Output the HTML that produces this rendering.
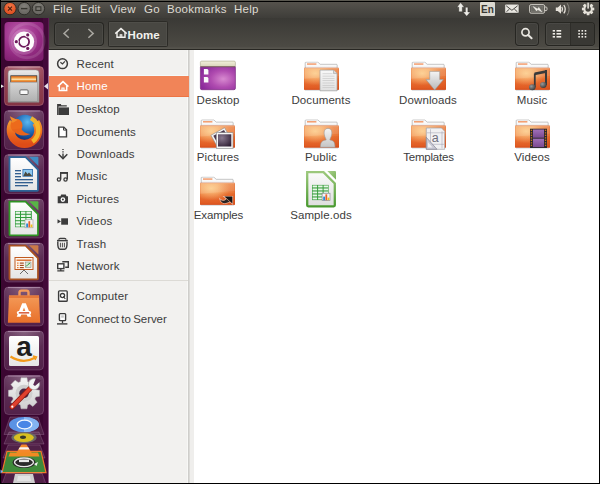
<!DOCTYPE html>
<html><head><meta charset="utf-8">
<style>
*{margin:0;padding:0;box-sizing:border-box}
html,body{width:600px;height:484px;overflow:hidden;background:#000}
body{position:relative;font-family:"Liberation Sans",sans-serif}
.abs{position:absolute}
#panel{left:1px;top:0;width:598px;height:18px;background:linear-gradient(#5a5850 0,#5a5850 1px,#000 1px,#000 2px,#55524c 2px,#3e3d39 100%)}
#toolbar{left:48px;top:18px;width:551px;height:32px;background:linear-gradient(#3a3935,#4c4a44 92%,#56544d 97%);border-bottom:1px solid #282723}
#launcher{left:1px;top:18px;width:47px;height:465px;background:#3b0631}
#lstrip{left:43px;top:18px;width:6px;height:465px;background:#430939;border-right:1px solid #5a1a50}
#sidebar{left:49px;top:50px;width:139px;height:433px;background:#f2f1ef;border-left:1px solid #f6f8f4}
#sep{left:187px;top:50px;width:2px;height:433px;background:#cfcecb;border-left:1px solid #f8f8f6}
#content{left:189px;top:50px;width:410px;height:433px;background:#fff}
#shade{left:189px;top:50px;width:5px;height:433px;background:#efeeec;border-left:1px solid #dcdbd8}
.menu{top:2px;font-size:11.5px;color:#dfdbd2;line-height:14px;letter-spacing:0.25px}
.side{left:76.5px;font-size:11.5px;color:#3c3c3c;line-height:14px;letter-spacing:0.15px}
.lbl{font-size:11.5px;color:#3c3c3c;line-height:14px;text-align:center;width:100px;letter-spacing:0.1px}
.btn{border-radius:4px;border:1px solid rgba(30,29,26,0.75);background:linear-gradient(#403f3b,#44433e);box-shadow:inset 0 0 0 1px rgba(255,255,255,0.05),0 1px 0 rgba(255,255,255,0.06)}
</style></head><body>
<div id="panel" class="abs"></div>
<svg class="abs" style="left:0;top:0" width="50" height="18" viewBox="0 0 50 18">
<defs><radialGradient id="wcl" cx="0.5" cy="0.35" r="0.65"><stop offset="0" stop-color="#f47a4a"/><stop offset="1" stop-color="#d9481a"/></radialGradient>
<radialGradient id="wgr" cx="0.5" cy="0.35" r="0.65"><stop offset="0" stop-color="#83817b"/><stop offset="1" stop-color="#64625d"/></radialGradient></defs>
<circle cx="10" cy="8.6" r="6.2" fill="url(#wcl)" stroke="#2a2925" stroke-width="0.9"/>
<path d="M8 6.6 L12 10.6 M12 6.6 L8 10.6" stroke="#4a1e0e" stroke-width="1.1"/>
<circle cx="24.2" cy="8.6" r="6.2" fill="url(#wgr)" stroke="#2a2925" stroke-width="0.9"/>
<path d="M21 8.6 H27.4" stroke="#36352f" stroke-width="1.4"/>
<circle cx="38.4" cy="8.6" r="6.2" fill="url(#wgr)" stroke="#2a2925" stroke-width="0.9"/>
<rect x="35.9" y="6.8" width="5" height="3.7" fill="none" stroke="#36352f" stroke-width="1.1"/>
</svg>
<div class="abs menu" style="left:53px">File</div>
<div class="abs menu" style="left:80px">Edit</div>
<div class="abs menu" style="left:110px">View</div>
<div class="abs menu" style="left:144px">Go</div>
<div class="abs menu" style="left:167px">Bookmarks</div>
<div class="abs menu" style="left:234px">Help</div>
<div id="toolbar" class="abs"></div>
<div id="launcher" class="abs"></div>
<div id="lstrip" class="abs"></div>
<div id="sidebar" class="abs"></div><div class="abs" style="left:48px;top:50px;width:1px;height:433px;background:#9a6a90"></div>
<div id="sep" class="abs"></div>
<div id="content" class="abs"></div>
<div id="shade" class="abs"></div>
<div class="abs btn" style="left:54px;top:22px;width:50px;height:24px"></div>
<div class="abs" style="left:108px;top:21px;width:60px;height:26px;background:#484742;border:1px solid #2c2b27;border-radius:1.5px;box-shadow:inset 0 0 0 1px rgba(255,255,255,0.04)"></div>
<div class="abs btn" style="left:515px;top:22px;width:24px;height:24px"></div>
<div class="abs btn" style="left:545px;top:22px;width:50px;height:24px"></div>
<div class="abs" style="left:570px;top:23px;width:24px;height:22px;background:#393834;border-left:1px solid #2e2d29;border-radius:0 3px 3px 0"></div>
<div class="abs" style="top:27.8px;width:50px;font-size:11.5px;font-weight:bold;color:#f2f1ee;line-height:14px;left:127.6px">Home</div>
<div class="abs" style="left:49px;top:75px;width:139px;height:1px;background:#f4fafa"></div><div class="abs" style="left:49px;top:76px;width:140px;height:21px;background:#f18458;border-bottom:1px solid #ec7444"></div>
<div class="abs" style="left:49px;top:280px;width:139px;height:1px;background:#dcdad5"></div>
<div class="abs side" style="top:56.6px">Recent</div>
<div class="abs side" style="top:79.1px;color:#fff">Home</div>
<div class="abs side" style="top:101.6px">Desktop</div>
<div class="abs side" style="top:124.5px">Documents</div>
<div class="abs side" style="top:146.6px">Downloads</div>
<div class="abs side" style="top:169px">Music</div>
<div class="abs side" style="top:191.5px">Pictures</div>
<div class="abs side" style="top:214px">Videos</div>
<div class="abs side" style="top:236.6px">Trash</div>
<div class="abs side" style="top:258.6px">Network</div>
<div class="abs side" style="top:288.5px">Computer</div>
<div class="abs side" style="top:312px;word-spacing:-0.8px;letter-spacing:-0.05px">Connect to Server</div>
<div class="abs lbl" style="left:168px;top:92.6px">Desktop</div>
<div class="abs lbl" style="left:271px;top:92.6px">Documents</div>
<div class="abs lbl" style="left:378px;top:92.6px">Downloads</div>
<div class="abs lbl" style="left:482px;top:92.6px">Music</div>
<div class="abs lbl" style="left:168px;top:149.8px">Pictures</div>
<div class="abs lbl" style="left:271px;top:149.8px">Public</div>
<div class="abs lbl" style="left:378.5px;top:149.8px;letter-spacing:-0.2px">Templates</div>
<div class="abs lbl" style="left:482px;top:149.8px">Videos</div>
<div class="abs lbl" style="left:168.5px;top:207.5px;letter-spacing:-0.15px">Examples</div>
<div class="abs lbl" style="left:271px;top:207.5px">Sample.ods</div>
<svg class="abs" style="left:0;top:0" width="600" height="484" viewBox="0 0 600 484"><defs>
<linearGradient id="tileg" x1="0" y1="0" x2="0" y2="1"><stop offset="0" stop-color="#ffe8ff" stop-opacity="0.2"/><stop offset="1" stop-color="#ffe8ff" stop-opacity="0.12"/></linearGradient>
<radialGradient id="tileshine" cx="0.5" cy="0" r="0.6" fx="0.5" fy="0"><stop offset="0" stop-color="#fff" stop-opacity="0.22"/><stop offset="1" stop-color="#fff" stop-opacity="0"/></radialGradient>
<radialGradient id="dashg" cx="0.4" cy="0.3" r="0.8"><stop offset="0" stop-color="#c060b0"/><stop offset="0.6" stop-color="#9a2f88"/><stop offset="1" stop-color="#7e1f6e"/></radialGradient>
<linearGradient id="filesg" x1="0" y1="0" x2="0" y2="1"><stop offset="0" stop-color="#9c4a5a"/><stop offset="1" stop-color="#843444"/></linearGradient>
<linearGradient id="cabtop" x1="0" y1="0" x2="0" y2="1"><stop offset="0" stop-color="#f4f4f4"/><stop offset="1" stop-color="#d8d8d8"/></linearGradient>
<linearGradient id="cabfront" x1="0" y1="0" x2="0" y2="1"><stop offset="0" stop-color="#d6d6d6"/><stop offset="1" stop-color="#b0b0b0"/></linearGradient>
<linearGradient id="ffor" x1="0" y1="0" x2="0" y2="1"><stop offset="0" stop-color="#f29a30"/><stop offset="0.5" stop-color="#ec6a1e"/><stop offset="1" stop-color="#de4c18"/></linearGradient>
<radialGradient id="ffblue" cx="0.6" cy="0.3" r="0.7"><stop offset="0" stop-color="#5ab8f0"/><stop offset="0.6" stop-color="#1f6ab8"/><stop offset="1" stop-color="#123a80"/></radialGradient>
<linearGradient id="docg" x1="0" y1="0" x2="0" y2="1"><stop offset="0" stop-color="#ffffff"/><stop offset="1" stop-color="#e4e4e4"/></linearGradient>
<linearGradient id="scg" x1="0" y1="0" x2="0" y2="1"><stop offset="0" stop-color="#f49a58"/><stop offset="1" stop-color="#e8702a"/></linearGradient>
<linearGradient id="amzg" x1="0" y1="0" x2="0" y2="1"><stop offset="0" stop-color="#ffffff"/><stop offset="1" stop-color="#e6e6e6"/></linearGradient>
<linearGradient id="gearg" x1="0" y1="0" x2="0" y2="1"><stop offset="0" stop-color="#f4f4f4"/><stop offset="1" stop-color="#cfcfcf"/></linearGradient>
<linearGradient id="fback" x1="0" y1="0" x2="0" y2="1"><stop offset="0" stop-color="#ffffff"/><stop offset="0.6" stop-color="#f8f8f8"/><stop offset="1" stop-color="#e0e0e0"/></linearGradient>
<linearGradient id="ffront" x1="0" y1="0" x2="0" y2="1"><stop offset="0" stop-color="#f59c5c"/><stop offset="0.45" stop-color="#f08444"/><stop offset="0.5" stop-color="#ec7636"/><stop offset="1" stop-color="#de5620"/></linearGradient>
<radialGradient id="fhl" cx="0.32" cy="0.25" r="0.55"><stop offset="0" stop-color="#ffdc9a" stop-opacity="0.8"/><stop offset="1" stop-color="#ffdc9a" stop-opacity="0"/></radialGradient><linearGradient id="fdark" x1="0" y1="0" x2="1" y2="0"><stop offset="0.5" stop-color="#c83c08" stop-opacity="0"/><stop offset="1" stop-color="#c83c08" stop-opacity="0.22"/></linearGradient>
<radialGradient id="deskg" cx="0.65" cy="0.55" r="0.7"><stop offset="0" stop-color="#d88ad0"/><stop offset="0.5" stop-color="#b04cb0"/><stop offset="1" stop-color="#8a2a9a"/></radialGradient>
<linearGradient id="deskbar" x1="0" y1="0" x2="0" y2="1"><stop offset="0" stop-color="#f2f0dc"/><stop offset="1" stop-color="#d8d4b8"/></linearGradient>
<symbol id="folder" viewBox="0 0 35 30">
<path d="M1.2 7 V1.4 Q1.2 0.6 2 0.6 H13.8 L16.2 2.8 H32.4 Q33.2 2.8 33.2 3.6 V7 Z" fill="url(#fback)" stroke="#a0a0a0" stroke-width="0.6"/>
<rect x="3" y="2" width="9.4" height="1.1" fill="#f07a3a"/>
<path d="M0 7 Q0 6.4 0.7 6.4 H34.3 Q35 6.4 35 7 V27.4 Q35 28.3 34 28.3 H1 Q0 28.3 0 27.4 Z" fill="url(#ffront)"/>
<path d="M0 7 Q0 6.4 0.7 6.4 H34.3 Q35 6.4 35 7 V27.4 Q35 28.3 34 28.3 H1 Q0 28.3 0 27.4 Z" fill="url(#fhl)"/>
<path d="M0 7 Q0 6.4 0.7 6.4 H34.3 Q35 6.4 35 7 V27.4 Q35 28.3 34 28.3 H1 Q0 28.3 0 27.4 Z" fill="url(#fdark)"/>
<path d="M0 7 Q0 6.4 0.7 6.4 H34.3 Q35 6.4 35 7 V14.5 Q18 15.5 0 17.5 Z" fill="#fff" opacity="0.1"/>
<path d="M0 7 Q0 6.4 0.7 6.4 H34.3 Q35 6.4 35 7 V27.4 Q35 28.3 34 28.3 H1 Q0 28.3 0 27.4 Z" fill="none" stroke="#d04c1c" stroke-width="0.6" opacity="0.55"/>
<path d="M0.6 27.9 H34.4" stroke="#c84818" stroke-width="0.8" opacity="0.6"/>
<rect x="0.4" y="6.4" width="34.2" height="0.6" fill="#fbc8a0" opacity="0.7"/>
<rect x="1" y="28.6" width="33" height="0.9" fill="#b8d0e0" opacity="0.45"/>
</symbol>
<linearGradient id="cabbody" x1="0" y1="0" x2="0" y2="1"><stop offset="0" stop-color="#ececec"/><stop offset="0.2" stop-color="#d8d8d8"/><stop offset="1" stop-color="#9a9a9a"/></linearGradient>
<linearGradient id="arrowg" x1="0" y1="0" x2="0" y2="1"><stop offset="0" stop-color="#f4f4f4"/><stop offset="1" stop-color="#b8b8b8"/></linearGradient>
<linearGradient id="pageg" x1="0" y1="0" x2="0" y2="1"><stop offset="0" stop-color="#f8f8f8"/><stop offset="1" stop-color="#e0e0e0"/></linearGradient>
<radialGradient id="noteg" cx="0.35" cy="0.35" r="0.7"><stop offset="0" stop-color="#9a9a9a"/><stop offset="1" stop-color="#3a3a3a"/></radialGradient>
<radialGradient id="photog" cx="0.3" cy="0.3" r="0.9"><stop offset="0" stop-color="#8a7a90"/><stop offset="1" stop-color="#2a1a30"/></radialGradient>
<linearGradient id="persong" x1="0" y1="0" x2="0" y2="1"><stop offset="0" stop-color="#f4f4f4"/><stop offset="1" stop-color="#c4c4c4"/></linearGradient>
<linearGradient id="odsborder" x1="0" y1="0" x2="0" y2="1"><stop offset="0" stop-color="#9cc87c"/><stop offset="1" stop-color="#4a9a30"/></linearGradient>
<linearGradient id="odsfill" x1="0" y1="0" x2="0" y2="1"><stop offset="0" stop-color="#fbfbfb"/><stop offset="1" stop-color="#dedede"/></linearGradient>
<linearGradient id="odscorner" x1="0" y1="0" x2="1" y2="1"><stop offset="0" stop-color="#a8d08a"/><stop offset="1" stop-color="#78b058"/></linearGradient>
<linearGradient id="filmg" x1="0" y1="0" x2="0" y2="1"><stop offset="0" stop-color="#a070b8"/><stop offset="1" stop-color="#7a4a90"/></linearGradient>
</defs>
<g>
<rect x="4.5" y="22" width="39" height="39" rx="4" fill="url(#dashg)"/>
<circle cx="27" cy="40.7" r="17" fill="none" stroke="rgba(255,255,255,0.12)" stroke-width="3"/>
<circle cx="24" cy="41.7" r="13" fill="rgba(255,255,255,0.18)"/>
<circle cx="24" cy="41.7" r="10.2" fill="#fdfbfc"/>
<circle cx="24" cy="41.7" r="5.1" fill="none" stroke="#6e1a5c" stroke-width="1.8"/>
<circle cx="27.73" cy="34.97" r="2.5" fill="#fdfbfc"/><circle cx="27.73" cy="34.97" r="1.6" fill="#6e1a5c"/><circle cx="16.30" cy="41.70" r="2.5" fill="#fdfbfc"/><circle cx="16.30" cy="41.70" r="1.6" fill="#6e1a5c"/><circle cx="27.73" cy="48.43" r="2.5" fill="#fdfbfc"/><circle cx="27.73" cy="48.43" r="1.6" fill="#6e1a5c"/>
</g>
<g>
<rect x="4.5" y="66.5" width="39" height="39" rx="4" fill="url(#filesg)" stroke="rgba(255,190,200,0.25)"/>
<rect x="4.5" y="66.5" width="39" height="39" rx="4" fill="url(#tileshine)"/>
<path d="M8 67.1 H40" stroke="rgba(255,230,240,0.4)" stroke-width="1"/>
<path d="M8.1 102.2 V73.1 Q8.1 69.9 11.3 69.9 H35.8 Q39 69.9 39 73.1 V102.2 Z" fill="url(#cabbody)" stroke="#8a8a8a" stroke-width="0.5"/>
<rect x="10.4" y="75.4" width="26.8" height="6.8" fill="#2a2a2a"/>
<rect x="11.2" y="76.3" width="25.2" height="5.9" fill="#f2a444"/>
<rect x="11.2" y="76.3" width="25.2" height="1" fill="#d86a28"/>
<rect x="11.5" y="78.7" width="24.6" height="1" fill="#fff0d0"/>
<rect x="11.2" y="80.8" width="25.2" height="1.4" fill="#e07a30"/>
<rect x="9.9" y="82.2" width="27.7" height="19.1" fill="url(#cabfront)" stroke="#8a8a8a" stroke-width="0.5"/>
<rect x="19.9" y="89.9" width="8.2" height="4.6" rx="1" fill="#f8f8f8" stroke="#5a5a5a" stroke-width="0.9"/>
<path d="M1 84.5 L4 86.3 L1 88.0 Z" fill="#e8e8e8"/>
<path d="M48 83.0 L44 86.3 L48 89.5 Z" fill="#e6e2ea"/>
</g>
<g>
<rect x="4.5" y="110.5" width="39" height="39" rx="4" fill="url(#tileg)" stroke="rgba(255,230,255,0.16)" stroke-width="1"/><rect x="4.5" y="110.5" width="39" height="39" rx="4" fill="url(#tileshine)"/><path d="M8 111.1 H40" stroke="rgba(255,230,255,0.35)" stroke-width="1"/>
<circle cx="25" cy="127.0" r="12.3" fill="url(#ffblue)"/>
<path d="M13.20 122.38 A13.8 13.8 0 1 0 35.80 122.38" stroke="url(#ffor)" stroke-width="8" fill="none"/>
<path d="M30.98 118.12 A13.8 13.8 0 0 1 32.42 141.6" stroke="#f6b62a" stroke-width="4.5" fill="none" opacity="0.95"/>
<ellipse cx="16.5" cy="125.5" rx="6" ry="6.8" fill="#ec6a1c"/>
<path d="M9.8 116.3 L12.5 123.0 L17.5 120.0 Z" fill="#f08a2a"/>
<path d="M12 129.5 Q19 138.5 30.5 134.0 Q24 133.5 21 128.5 Z" fill="#e8641c"/>
</g>
<g><rect x="4.5" y="154.5" width="39" height="39" rx="4" fill="url(#tileg)" stroke="rgba(255,230,255,0.16)" stroke-width="1"/><rect x="4.5" y="154.5" width="39" height="39" rx="4" fill="url(#tileshine)"/><path d="M8 155.1 H40" stroke="rgba(255,230,255,0.35)" stroke-width="1"/><path d="M9.5 157.1 H25.6 L38 169.5 V190.1 Q38 190.9 37.2 190.9 H10.3 Q9.5 190.9 9.5 190.1 Z" fill="url(#docg)" stroke="#2d6498" stroke-width="1.8"/>
<path d="M29 156.7 H37.4 Q38.4 156.7 38.4 157.7 V166.1 Z" fill="#3f8cc4"/>
<rect x="15" y="170.1" width="6" height="1.2" fill="#1f4f86"/>
<rect x="15" y="173.1" width="6" height="1.2" fill="#1f4f86"/>
<rect x="15" y="176.1" width="6" height="1.2" fill="#1f4f86"/>
<rect x="22.5" y="169.1" width="10.5" height="7.6" fill="#2c6aa8"/>
<rect x="23.3" y="169.9" width="8.9" height="6" fill="#8ec8f0"/>
<path d="M23.3 175.9 L25.5 171.5 L27.5 174.0 L29 172.5 L32.2 175.9 Z" fill="#4a4a40"/>
<rect x="15" y="179.1" width="18" height="1.2" fill="#1f4f86"/>
<rect x="15" y="182.1" width="18" height="1.2" fill="#1f4f86"/>
<rect x="15" y="185.1" width="13" height="1.2" fill="#1f4f86"/>
</g>
<g><rect x="4.5" y="199" width="39" height="39" rx="4" fill="url(#tileg)" stroke="rgba(255,230,255,0.16)" stroke-width="1"/><rect x="4.5" y="199" width="39" height="39" rx="4" fill="url(#tileshine)"/><path d="M8 199.6 H40" stroke="rgba(255,230,255,0.35)" stroke-width="1"/><path d="M9.5 201.6 H25.6 L38 214 V234.6 Q38 235.4 37.2 235.4 H10.3 Q9.5 235.4 9.5 234.6 Z" fill="url(#docg)" stroke="#2f9424" stroke-width="1.8"/>
<path d="M29 201.2 H37.4 Q38.4 201.2 38.4 202.2 V210.6 Z" fill="#58b446"/>
<rect x="15" y="211" width="16.8" height="16.2" fill="#2f9a3a"/><rect x="15.6" y="211.6" width="4.4" height="2.2" fill="#e8f6e8"/><rect x="21.0" y="211.6" width="4.4" height="2.2" fill="#e8f6e8"/><rect x="26.4" y="211.6" width="4.4" height="2.2" fill="#e8f6e8"/><rect x="15.6" y="214.79999999999998" width="4.4" height="2.2" fill="#e8f6e8"/><rect x="21.0" y="214.79999999999998" width="4.4" height="2.2" fill="#e8f6e8"/><rect x="26.4" y="214.79999999999998" width="4.4" height="2.2" fill="#e8f6e8"/><rect x="15.6" y="218.0" width="4.4" height="2.2" fill="#e8f6e8"/><rect x="21.0" y="218.0" width="4.4" height="2.2" fill="#e8f6e8"/><rect x="26.4" y="218.0" width="4.4" height="2.2" fill="#e8f6e8"/><rect x="15.6" y="221.2" width="4.4" height="2.2" fill="#e8f6e8"/><rect x="21.0" y="221.2" width="4.4" height="2.2" fill="#e8f6e8"/><rect x="26.4" y="221.2" width="4.4" height="2.2" fill="#e8f6e8"/><rect x="15.6" y="224.4" width="4.4" height="2.2" fill="#e8f6e8"/><rect x="21.0" y="224.4" width="4.4" height="2.2" fill="#e8f6e8"/><rect x="26.4" y="224.4" width="4.4" height="2.2" fill="#e8f6e8"/>
<rect x="25" y="219.8" width="8" height="8" fill="#f4f4f4" stroke="#9a9a9a" stroke-width="0.6"/>
<rect x="26.2" y="223.5" width="1.8" height="3.8" fill="#2a8ad8"/>
<rect x="28.4" y="221.2" width="1.8" height="6.1" fill="#e8602a"/>
<rect x="30.6" y="224.5" width="1.8" height="2.8" fill="#f0c020"/>
</g>
<g><rect x="4.5" y="243" width="39" height="39" rx="4" fill="url(#tileg)" stroke="rgba(255,230,255,0.16)" stroke-width="1"/><rect x="4.5" y="243" width="39" height="39" rx="4" fill="url(#tileshine)"/><path d="M8 243.6 H40" stroke="rgba(255,230,255,0.35)" stroke-width="1"/><path d="M9.5 245.6 H25.6 L38 258 V278.6 Q38 279.4 37.2 279.4 H10.3 Q9.5 279.4 9.5 278.6 Z" fill="url(#docg)" stroke="#a85020" stroke-width="1.8"/>
<path d="M29 245.2 H37.4 Q38.4 245.2 38.4 246.2 V254.6 Z" fill="#cc7a48"/>
<rect x="15" y="257.5" width="18" height="12" fill="#fff8f0" stroke="#c05a20" stroke-width="1"/>
<rect x="16.5" y="259.5" width="15" height="1.4" fill="#d86a2a"/>
<rect x="17" y="262.5" width="1.6" height="1.2" fill="#e08040"/><rect x="19.8" y="262.5" width="4" height="1.2" fill="#a04a20"/>
<rect x="17" y="264.8" width="1.6" height="1.2" fill="#e08040"/><rect x="19.8" y="264.8" width="4" height="1.2" fill="#a04a20"/>
<rect x="17" y="267" width="1.6" height="1.2" fill="#e08040"/><rect x="19.8" y="267" width="4" height="1.2" fill="#a04a20"/>
<rect x="25.2" y="262" width="5.8" height="5.6" fill="#d8e8d8" stroke="#7a7a7a" stroke-width="0.5"/>
<path d="M26 266.5 L28 264.5 L30 263" stroke="#2a9a3a" stroke-width="1" fill="none"/>
<path d="M24 270 L20 274 M24 270 L28 274" stroke="#5a5a5a" stroke-width="0.9"/>
</g>
<g><rect x="4.5" y="287" width="39" height="39" rx="4" fill="url(#tileg)" stroke="rgba(255,230,255,0.16)" stroke-width="1"/><rect x="4.5" y="287" width="39" height="39" rx="4" fill="url(#tileshine)"/><path d="M8 287.6 H40" stroke="rgba(255,230,255,0.35)" stroke-width="1"/>
<path d="M19.5 296 V292.5 Q19.5 290.6 21.5 290.6 H26.5 Q28.5 290.6 28.5 292.5 V296" stroke="#f49a5a" stroke-width="2.4" fill="none"/>
<path d="M9 295.4 H39 L40.2 322.7 H7.9 Z" fill="url(#scg)"/>
<path d="M9 295.4 H39 L39.1 298 H8.9 Z" fill="#e4783a"/>
<path d="M22.2 303.3 H25.8 L31.3 316.7 H27.6 L24 307.5 L20.4 316.7 H16.7 Z" fill="#fff"/>
<rect x="16.8" y="311" width="14.4" height="3.6" rx="1.8" fill="#fff"/>
<rect x="18.8" y="312.2" width="10.4" height="1.3" fill="#d0401a"/>
</g>
<g><rect x="4.5" y="331" width="39" height="39" rx="4" fill="url(#tileg)" stroke="rgba(255,230,255,0.16)" stroke-width="1"/><rect x="4.5" y="331" width="39" height="39" rx="4" fill="url(#tileshine)"/><path d="M8 331.6 H40" stroke="rgba(255,230,255,0.35)" stroke-width="1"/>
<rect x="9" y="336" width="30" height="30" rx="1.5" fill="url(#amzg)"/>
<text x="24" y="355.5" text-anchor="middle" font-family="Liberation Sans" font-weight="bold" font-size="28" fill="#1e1e1e">a</text>
<path d="M10.5 356.5 Q23 364.5 35.5 357.5" stroke="#f39a1a" stroke-width="2.2" fill="none"/>
<path d="M33 356 L36.5 357 L35 360" stroke="#f39a1a" stroke-width="1.5" fill="none"/>
</g>
<g><rect x="4.5" y="375.5" width="39" height="39" rx="4" fill="url(#tileg)" stroke="rgba(255,230,255,0.16)" stroke-width="1"/><rect x="4.5" y="375.5" width="39" height="39" rx="4" fill="url(#tileshine)"/><path d="M8 376.1 H40" stroke="rgba(255,230,255,0.35)" stroke-width="1"/>
<path d="M20.39 381.64 L21.02 377.78 L26.98 377.78 L27.61 381.64 L29.69 382.51 L32.86 380.22 L37.08 384.44 L34.79 387.61 L35.66 389.69 L39.52 390.32 L39.52 396.28 L35.66 396.91 L34.79 398.99 L37.08 402.16 L32.86 406.38 L29.69 404.09 L27.61 404.96 L26.98 408.82 L21.02 408.82 L20.39 404.96 L18.31 404.09 L15.14 406.38 L10.92 402.16 L13.21 398.99 L12.34 396.91 L8.48 396.28 L8.48 390.32 L12.34 389.69 L13.21 387.61 L10.92 384.44 L15.14 380.22 L18.31 382.51 Z" fill="url(#gearg)" stroke="#b8b8b8" stroke-width="0.5"/>
<circle cx="24" cy="393.3" r="8.5" fill="#cfcfcf"/>
<circle cx="24" cy="393.3" r="4.8" fill="#4a2442"/>
<path d="M12 407.0 L30.5 388.0" stroke="#8a1a10" stroke-width="5.2" stroke-linecap="round"/>
<path d="M12 407.0 L30.5 388.0" stroke="#e0402e" stroke-width="3.6" stroke-linecap="round"/>
<circle cx="12.3" cy="406.7" r="1.1" fill="#fff"/>
<circle cx="34" cy="384.1" r="5.6" fill="#f2f2f2" stroke="#a0a0a0" stroke-width="0.6"/>
<path d="M33.2 384.7 L36 378.0 L41.5 380.5 L35 386.0 Z" fill="#5a2a52"/>
</g>
<g>
<path d="M10 417 H38 L44 434.5 H4 Z" fill="rgba(255,255,255,0.11)" stroke="rgba(255,220,255,0.22)" stroke-width="0.8"/>
<ellipse cx="24" cy="424.6" rx="15" ry="7.7" fill="#5a92e4"/>
<path d="M24 416.9 A15 7.7 0 0 1 24 432.3 Z" fill="#84b4f2"/>
<ellipse cx="24.5" cy="424.5" rx="7.3" ry="4.3" fill="#4a86e6" stroke="#f4f8ff" stroke-width="1.3"/>
<path d="M9 432 H39 L44 444 H4 Z" fill="rgba(255,255,255,0.11)" stroke="rgba(255,220,255,0.22)" stroke-width="0.8"/>
<ellipse cx="24" cy="437.6" rx="12.6" ry="5.6" fill="#6a6a66"/>
<ellipse cx="23.8" cy="437.6" rx="10" ry="4.3" fill="#d8c020"/>
<ellipse cx="23" cy="437.2" rx="3" ry="1.7" fill="#3a3a2a"/>
<path d="M8 445 H40 L45 458 H3 Z" fill="rgba(255,255,255,0.11)" stroke="rgba(255,220,255,0.22)" stroke-width="0.8"/>
<path d="M7 451.3 H41 L46 472.7 H2 Z" fill="#3e8a3a" stroke="#f07a2a" stroke-width="1.2"/>
<path d="M21.5 444.4 H26.5 L33 455 H15 Z" fill="#f4882a"/>
<path d="M19.8 447.3 H28.2 L29.6 449.6 H18.4 Z" fill="#f8f4ee"/>
<path d="M10 452.5 H38 L39.5 456.5 H8.5 Z" fill="#f08a22"/>
<ellipse cx="24" cy="462.5" rx="11.5" ry="5.6" fill="#2a2a2a"/>
<ellipse cx="24" cy="462.3" rx="9.5" ry="4.3" fill="none" stroke="#e8e8e8" stroke-width="1.4"/>
<rect x="19" y="459.5" width="10" height="2.6" fill="#e8e8e8"/>
<path d="M34 464 L38 462 L36.5 466 Z" fill="#f0f0f0"/>
<path d="M6 473 H42 L46 484 H2 Z" fill="rgba(255,255,255,0.11)" stroke="rgba(255,220,255,0.22)" stroke-width="0.8"/>
<path d="M15 474 H33 L35 483 H13 Z" fill="#cfcfcf"/>
<path d="M18 476 H30 L31 481 H17 Z" fill="#f0f0f0" opacity="0.6"/>
<path d="M0.5 469.5 L3 471.5 L0.5 473.5 Z" fill="#7ab0f0"/>
</g><g>
<rect x="200.4" y="65.9" width="35" height="23.8" rx="1.5" fill="url(#deskg)" stroke="#7a2a80" stroke-width="0.7"/>
<rect x="200.4" y="61.1" width="35" height="5.6" rx="1.3" fill="url(#deskbar)" stroke="#a8a488" stroke-width="0.6"/>
<rect x="200.4" y="66.3" width="35" height="0.9" fill="#5a3a40" opacity="0.7"/>
<path d="M203.9 69.1 H207.4 L208.4 70.1 V74.6 H203.9 Z" fill="#fafafa"/>
<path d="M203.9 77.1 H207.4 L208.4 78.1 V82.6 H203.9 Z" fill="#fafafa"/>
</g>
<use href="#folder" x="304" y="61.5" width="35" height="30"/><g>
<path d="M320 70.1 H333.5 L337 73.6 V90.8 H320 Z" fill="url(#pageg)" stroke="#a0a0a0" stroke-width="0.7"/>
<path d="M333.5 70.1 V73.6 H337" fill="#d8d8d8" stroke="#a0a0a0" stroke-width="0.6"/>
<rect x="322.5" y="73.5" width="10" height="0.6" fill="#c4c4c4"/><rect x="322.5" y="75.8" width="12" height="0.6" fill="#c4c4c4"/><rect x="322.5" y="78.1" width="12" height="0.6" fill="#c4c4c4"/><rect x="322.5" y="80.4" width="12" height="0.6" fill="#c4c4c4"/><rect x="322.5" y="82.7" width="12" height="0.6" fill="#c4c4c4"/><rect x="322.5" y="85.0" width="12" height="0.6" fill="#c4c4c4"/><rect x="322.5" y="87.3" width="12" height="0.6" fill="#c4c4c4"/></g>
<use href="#folder" x="411" y="61.5" width="35" height="30"/><g>
<path d="M429.7 71.4 H439.7 V79.6 H443.4 L434.7 90.1 L426 79.6 H429.7 Z" fill="url(#arrowg)" stroke="#9a9a9a" stroke-width="0.6"/>
</g>
<use href="#folder" x="515" y="61.5" width="35" height="30"/><g>
<path d="M546 70.1 V85.0" stroke="#3a3a3a" stroke-width="2" fill="none"/>
<path d="M534.8 73.5 V87.0" stroke="#3a3a3a" stroke-width="1.8"/>
<path d="M534.5 72.5 L547 69.9 V72.7 L534.5 75.3 Z" fill="#3a3a3a"/>
<ellipse cx="532.3" cy="87.2" rx="3.3" ry="3" fill="url(#noteg)"/>
<ellipse cx="543.3" cy="84.9" rx="3.3" ry="3" fill="url(#noteg)"/>
</g>
<use href="#folder" x="200" y="119.3" width="35" height="30"/><g>
<path d="M210.9 135.3 L224.6 127.7 L231 139.3 L217.5 146.9 Z" fill="#f4f4f4" stroke="#8a8a8a" stroke-width="0.6"/>
<path d="M213.3 135.7 L224 129.9 L229 138.8 L218.2 144.6 Z" fill="#4a3a50"/>
<rect x="216.3" y="132.7" width="16.7" height="15.6" fill="#f6f6f6" stroke="#8a8a8a" stroke-width="0.6"/>
<rect x="218" y="134.3" width="13.3" height="12.2" fill="url(#photog)"/>
</g>
<use href="#folder" x="304" y="119.3" width="35" height="30"/><g>
<path d="M328 128.4 C331.8 128.4 332.2 132.3 331.6 134.8 C331.2 137.3 330 138.8 329.8 139.9 C333.8 140.5 335 142.3 335 147.3 H320.4 C320.4 142.3 321.8 140.5 326.2 139.9 C326 138.8 324.8 137.3 324.4 134.8 C323.8 132.3 324.2 128.4 328 128.4 Z" fill="url(#persong)" stroke="#9a9a9a" stroke-width="0.6"/>
</g>
<use href="#folder" x="411" y="119.3" width="35" height="30"/><g>
<path d="M426.3 128.0 H441.5 L444.7 131.2 V149.3 H426.3 Z" fill="#f0f0f2" stroke="#a0a0a8" stroke-width="0.7"/>
<path d="M430.5 129.3 V148.3 M442 131.3 V148.3 M427 132.8 H444 M427 144.3 H444" stroke="#9a9aac" stroke-width="0.5"/>
<text x="435.3" y="142.3" text-anchor="middle" font-family="Liberation Sans" font-size="12.5" fill="#6e6e7c">a</text>
<path d="M426.3 137.3 L437 149.3 H426.3 Z" fill="#c8c8d4" stroke="#7a7a8a" stroke-width="0.6"/>
<path d="M428 142.3 L432.5 147.6 H428 Z" fill="#f0f0f2"/>
</g>
<use href="#folder" x="515" y="119.3" width="35" height="30"/><g>
<rect x="530" y="128.7" width="17" height="19.3" fill="#2e2a2e"/>
<rect x="530.8" y="129.7" width="1.3" height="1.3" fill="#c8781a"/><rect x="544.9" y="129.7" width="1.3" height="1.3" fill="#c8781a"/><rect x="530.8" y="132.2" width="1.3" height="1.3" fill="#c8781a"/><rect x="544.9" y="132.2" width="1.3" height="1.3" fill="#c8781a"/><rect x="530.8" y="134.7" width="1.3" height="1.3" fill="#c8781a"/><rect x="544.9" y="134.7" width="1.3" height="1.3" fill="#c8781a"/><rect x="530.8" y="137.2" width="1.3" height="1.3" fill="#c8781a"/><rect x="544.9" y="137.2" width="1.3" height="1.3" fill="#c8781a"/><rect x="530.8" y="139.7" width="1.3" height="1.3" fill="#c8781a"/><rect x="544.9" y="139.7" width="1.3" height="1.3" fill="#c8781a"/><rect x="530.8" y="142.2" width="1.3" height="1.3" fill="#c8781a"/><rect x="544.9" y="142.2" width="1.3" height="1.3" fill="#c8781a"/><rect x="530.8" y="144.7" width="1.3" height="1.3" fill="#c8781a"/><rect x="544.9" y="144.7" width="1.3" height="1.3" fill="#c8781a"/>
<rect x="533" y="129.5" width="11" height="8.2" fill="url(#filmg)"/>
<rect x="533" y="138.7" width="11" height="8.4" fill="url(#filmg)"/>
</g>
<use href="#folder" x="200" y="176.5" width="35" height="30"/><g>
<path d="M220.2 199.5 Q221.8 205.5 229.8 201.7 L226.4 198.9 Q223.5 202.3 220.2 199.5 Z M224.4 196.6 H232.4 V203.4 Z" fill="#fff" stroke="#fff" stroke-width="1.4" opacity="0.55"/>
<path d="M220.2 199.5 Q221.8 205.5 229.8 201.7 L226.4 198.9 Q223.5 202.3 220.2 199.5 Z" fill="#2a2424"/>
<path d="M224.4 196.6 H232.4 V203.4 Z" fill="#161414"/>
</g>
<g>
<path d="M307.2 172.2 H323.5 L334.8 183.5 V205.3 Q334.8 206.3 333.8 206.3 H308.2 Q307.2 206.3 307.2 205.3 Z" fill="url(#odsfill)" stroke="url(#odsborder)" stroke-width="2.3"/>
<path d="M327.3 171.1 H335 Q336 171.1 336 172.1 V179.7 Z" fill="url(#odscorner)"/>
<rect x="312" y="184.9" width="16.6" height="15.2" fill="#3a9e3e"/>
<rect x="312.6" y="185.5" width="4.5" height="1.9" fill="#e8f6e8"/><rect x="318.1" y="185.5" width="4.5" height="1.9" fill="#e8f6e8"/><rect x="323.6" y="185.5" width="4.5" height="1.9" fill="#e8f6e8"/><rect x="312.6" y="188.5" width="4.5" height="1.9" fill="#e8f6e8"/><rect x="318.1" y="188.5" width="4.5" height="1.9" fill="#e8f6e8"/><rect x="323.6" y="188.5" width="4.5" height="1.9" fill="#e8f6e8"/><rect x="312.6" y="191.5" width="4.5" height="1.9" fill="#e8f6e8"/><rect x="318.1" y="191.5" width="4.5" height="1.9" fill="#e8f6e8"/><rect x="323.6" y="191.5" width="4.5" height="1.9" fill="#e8f6e8"/><rect x="312.6" y="194.5" width="4.5" height="1.9" fill="#e8f6e8"/><rect x="318.1" y="194.5" width="4.5" height="1.9" fill="#e8f6e8"/><rect x="323.6" y="194.5" width="4.5" height="1.9" fill="#e8f6e8"/><rect x="312.6" y="197.5" width="4.5" height="1.9" fill="#e8f6e8"/><rect x="318.1" y="197.5" width="4.5" height="1.9" fill="#e8f6e8"/><rect x="323.6" y="197.5" width="4.5" height="1.9" fill="#e8f6e8"/>
<rect x="322.1" y="193.2" width="7.9" height="7.4" fill="#f6f6f6" stroke="#7a7a8a" stroke-width="0.6"/>
<rect x="323.2" y="196.6" width="1.8" height="3.6" fill="#2a8ad8"/>
<rect x="325.4" y="194.3" width="1.8" height="5.9" fill="#e8602a"/>
<rect x="327.6" y="197.6" width="1.8" height="2.6" fill="#f0c020"/>
</g><g id="sideicons" fill="none" stroke="#3c3c3c">
<!-- recent -->
<circle cx="62.5" cy="63.7" r="4.9" stroke-width="1.5"/>
<path d="M60.4 62.2 L62.5 64 L64.9 61.4" stroke-width="1.2"/>
<!-- home (white) -->
<path d="M57.6 86.6 L63 81.6 L68.4 86.6" stroke="#fff" stroke-width="1.6"/>
<path d="M59.3 85.5 V90.6 H66.7 V85.5" stroke="#fff" stroke-width="1.5"/>
<path d="M62 90.6 V88 H64 V90.6" stroke="#fff" stroke-width="1.2"/>
<!-- desktop folder -->
<path d="M57.1 104.1 H60.8 L61.4 105.3 H66.8 V106.6 H58.5 V115 H57.1 Z" fill="#3c3c3c" stroke="none"/>
<rect x="58.5" y="107.4" width="10.5" height="7.6" fill="#3c3c3c" stroke="none"/>
<!-- documents -->
<path d="M58.8 127.1 H63.8 L66.5 129.8 V136.9 H58.8 Z" stroke-width="1.4" fill="#fff"/>
<path d="M63.5 127.1 V130.1 H66.5" stroke-width="1"/>
<!-- downloads -->
<path d="M63 148.9 V150.1 M63 151.3 V152.4 M63 153.4 V157.8" stroke-width="1.4"/>
<path d="M58.6 154.3 L63 158.6 L67.3 154.3" stroke-width="1.5"/>
<!-- music -->
<path d="M60.7 179.5 V172.7 H67.3 V179.3" stroke-width="1.4"/>
<path d="M60.7 173.2 H67.3" stroke-width="1.2"/>
<circle cx="58.9" cy="179.5" r="1.6" stroke-width="1.3"/>
<circle cx="65.5" cy="179.5" r="1.6" stroke-width="1.3"/>
<!-- pictures camera -->
<path d="M57.7 196.2 H60.5 L61.2 194.5 H65.8 L66.5 196.2 H68 V203.2 H57.7 Z" fill="#3c3c3c" stroke="none"/>
<circle cx="62.9" cy="199.6" r="2.3" fill="#fff" stroke="none"/>
<circle cx="62.9" cy="199.6" r="1" fill="#3c3c3c" stroke="none"/>
<!-- videos -->
<path d="M57.5 219.2 L61 221.4 L57.5 223.6 Z" fill="#3c3c3c" stroke="none"/>
<rect x="61.2" y="218.3" width="6.8" height="6.4" fill="#3c3c3c" stroke="none"/>
<!-- trash -->
<path d="M57 240.6 H67.8" stroke-width="1.5"/>
<path d="M58.8 239.8 Q58.8 238.4 60.2 238.4 H64.6 Q66 238.4 66 239.8" stroke-width="1.2"/>
<path d="M57.8 241.5 Q57.5 249.2 60 249.2 H64.8 Q67.3 249.2 67 241.5" stroke-width="1.4"/>
<path d="M60.4 242.8 V247.3 M62.4 242.8 V247.3 M64.4 242.8 V247.3" stroke-width="0.9"/>
<!-- network -->
<rect x="57.7" y="263.8" width="6.2" height="4.8" stroke-width="1.4" fill="#fff"/>
<path d="M60.8 268.6 V270.3 M57.3 270.8 H64.3" stroke-width="1.3"/>
<path d="M62.3 261.7 H68.3 V267.2 H65.2" stroke-width="1.4"/>
<!-- computer (hdd) -->
<rect x="58.6" y="290.9" width="8.6" height="10.4" rx="0.9" stroke-width="1.4" fill="#fff"/>
<circle cx="62.5" cy="295.6" r="2.1" stroke-width="1.3"/>
<path d="M63.3 296.4 L65.3 299" stroke-width="1.1"/>
<!-- connect to server -->
<rect x="59.4" y="313.6" width="6.2" height="7" rx="0.8" stroke-width="1.4" fill="#fff"/>
<rect x="61.2" y="315.3" width="2.6" height="2.4" fill="#c8c8c8" stroke="none"/>
<path d="M62.5 320.6 V323.2" stroke-width="1.3"/>
<path d="M57 323.9 H67.4" stroke-width="1.4"/>
</g>
<g id="tbicons" fill="none">
<path d="M68.8 29 L64 33.4 L68.8 37.8" stroke="#a8a6a0" stroke-width="1.5"/>
<path d="M88.4 29 L93.2 33.4 L88.4 37.8" stroke="#a8a6a0" stroke-width="1.5"/>
<!-- home button house -->
<path d="M115.3 33.6 L121 28.6 L126.7 33.6" stroke="#f2f1ee" stroke-width="1.5"/>
<path d="M117 32.3 V37.3 H125 V32.3" stroke="#f2f1ee" stroke-width="1.4"/>
<path d="M120.2 37.3 V34.8 H121.8 V37.3" stroke="#f2f1ee" stroke-width="1.1"/>
<!-- search -->
<circle cx="525.5" cy="32.3" r="3.6" stroke="#e8e6e0" stroke-width="1.7"/>
<path d="M528.2 35 L531.6 38.3" stroke="#e8e6e0" stroke-width="2" stroke-linecap="round"/>
<!-- list -->
<g fill="#eeece6">
<rect x="552.7" y="30" width="2.3" height="1.6"/><rect x="556.5" y="30" width="4.7" height="1.6"/>
<rect x="552.7" y="33" width="2.3" height="1.6"/><rect x="556.5" y="33" width="4.7" height="1.6"/>
<rect x="552.7" y="36" width="2.3" height="1.6"/><rect x="556.5" y="36" width="4.7" height="1.6"/>
</g>
<g fill="#eeece6">
<rect x="578.3" y="30" width="1.6" height="1.6"/><rect x="581.5" y="30" width="1.6" height="1.6"/><rect x="584.7" y="30" width="1.6" height="1.6"/>
<rect x="578.3" y="33" width="1.6" height="1.6"/><rect x="581.5" y="33" width="1.6" height="1.6"/><rect x="584.7" y="33" width="1.6" height="1.6"/>
<rect x="578.3" y="36" width="1.6" height="1.6"/><rect x="581.5" y="36" width="1.6" height="1.6"/><rect x="584.7" y="36" width="1.6" height="1.6"/>
</g>
</g>
<g id="indicators">
<path d="M460.6 2.6 L456.9 7.2 H458.8 V11.8 H462.3 V7.2 H464.4 Z" fill="#ecebe6" stroke="#1e1d1a" stroke-width="0.6" stroke-opacity="0.6"/>
<path d="M466.7 16.3 L470.4 12 H467.9 V7.2 H465.4 V12 H463.1 Z" fill="#ecebe6" stroke="#1e1d1a" stroke-width="0.6" stroke-opacity="0.6"/>
<rect x="480" y="2" width="15" height="14" rx="1" fill="#dcd9d0"/>
<text x="487.5" y="13" text-anchor="middle" font-family="Liberation Sans" font-weight="bold" font-size="10" fill="#3a3935">En</text>
<rect x="504.9" y="4.3" width="14" height="8.8" rx="1.2" fill="#e8e6e0" stroke="#24231f" stroke-width="0.5" stroke-opacity="0.7"/>
<path d="M506.2 5.8 L511.9 10.3 L517.6 5.8 M506.4 11.8 L509.5 9 M517.4 11.8 L514.3 9" stroke="#3a3935" stroke-width="0.9" fill="none"/>
<rect x="529.6" y="4.6" width="15" height="8.6" rx="1.5" fill="#4e4d48" stroke="#cfccc4" stroke-width="1"/>
<rect x="531.1" y="6" width="12" height="5.8" fill="#6a6963" stroke="#8a8882" stroke-width="0.5"/>
<path d="M544.8 7 H546 Q547 7 547 8 V9.6 Q547 10.6 546 10.6 H544.8" fill="none" stroke="#cfccc4" stroke-width="1"/>
<path d="M533.2 6.6 L537.6 9 L538.8 7.4 L541.8 11.8 L537.6 9.6 L536.6 11 Z" fill="#f0eee8" stroke="#f0eee8" stroke-width="0.5"/>
<path d="M555.8 7.4 H557.8 L561 4.5 V13.8 L557.8 11 H555.8 Z" fill="#e6e2da"/>
<path d="M561.8 6.8 Q563.4 9.2 561.8 11.6" stroke="#e6e2da" stroke-width="1.3" fill="none"/>
<path d="M563.8 5 Q566.7 9.2 563.8 13.4" stroke="#e6e2da" stroke-width="1.3" fill="none"/>
<path d="M567.2 3.2 Q571 9.3 567.2 15.4" stroke="#8a8780" stroke-width="1" fill="none"/>
<path d="M586.48 4.69 L586.85 2.83 L589.35 2.83 L589.72 4.69 L590.00 4.81 L591.58 3.75 L593.35 5.52 L592.29 7.10 L592.41 7.38 L594.27 7.75 L594.27 10.25 L592.41 10.62 L592.29 10.90 L593.35 12.48 L591.58 14.25 L590.00 13.19 L589.72 13.31 L589.35 15.17 L586.85 15.17 L586.48 13.31 L586.20 13.19 L584.62 14.25 L582.85 12.48 L583.91 10.90 L583.79 10.62 L581.93 10.25 L581.93 7.75 L583.79 7.38 L583.91 7.10 L582.85 5.52 L584.62 3.75 L586.20 4.81 Z" fill="#e6e2da"/>
<circle cx="588.1" cy="9.0" r="2.7" fill="#45443f"/>
<rect x="586.40" y="2" width="3.4" height="6.2" fill="#45443f"/>
<rect x="587.30" y="2.6" width="1.6" height="6" fill="#e6e2da"/>
</g>
</svg>
<div class="abs" style="left:0;top:483px;width:600px;height:1px;background:#000"></div>
</body></html>
